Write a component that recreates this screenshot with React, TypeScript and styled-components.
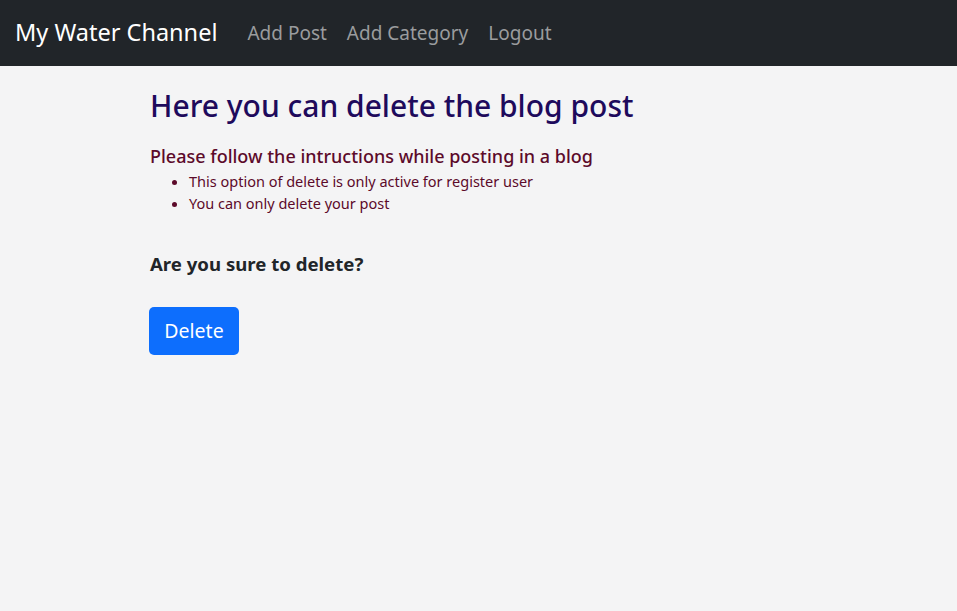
import React from "react";
import styled, { createGlobalStyle } from "styled-components";

const Global = createGlobalStyle`
  html, body { margin: 0; padding: 0; background: #f4f4f5; }
  body { font-family: "Noto Sans", "Open Sans", sans-serif; }
  * { box-sizing: border-box; }
`;

const Page = styled.div`
  min-height: 611px;
  background: #f4f4f5;
`;

const NavBar = styled.nav`
  height: 66px;
  background: #212529;
  display: flex;
  align-items: center;
  padding: 0 15px;
`;

const Brand = styled.a`
  color: #ffffff;
  font-size: 23.5px;
  text-decoration: none;
  margin-right: 30px;
  line-height: 1;
`;

const NavLinks = styled.div`
  display: flex;
  gap: 20px;
`;

const NavLink = styled.a`
  color: #9a9c9e;
  font-size: 19px;
  text-decoration: none;
  line-height: 1;
`;

const Main = styled.main`
  padding: 22px 0 0 150px;
  display: flex;
  flex-direction: column;
  align-items: flex-start;
`;

const Title = styled.h1`
  margin: 0;
  font-size: 30px;
  font-weight: 500;
  color: #1e0a5c;
  line-height: 1.2;
`;

const SubTitle = styled.h4`
  margin: 22px 0 0;
  font-size: 18px;
  font-weight: 500;
  color: #5c0a2a;
  line-height: 1.2;
`;

const List = styled.ul`
  margin: 2px 0 0;
  padding-left: 39px;
  color: #5c0a2a;
  font-size: 14.5px;
  line-height: 22px;
`;

const Question = styled.h5`
  margin: 39px 0 0;
  font-size: 18.6px;
  font-weight: 700;
  color: #212529;
  line-height: 1.2;
`;

const DeleteButton = styled.button`
  margin-top: 32px;
  margin-left: -1px;
  width: 90px;
  height: 48px;
  border: none;
  border-radius: 5px;
  background: #0d6efd;
  color: #ffffff;
  font-family: inherit;
  font-size: 19.5px;
  cursor: pointer;
`;

export default function App() {
  return (
    <Page>
      <Global />
      <NavBar>
        <Brand href="#">My Water Channel</Brand>
        <NavLinks>
          <NavLink href="#">Add Post</NavLink>
          <NavLink href="#">Add Category</NavLink>
          <NavLink href="#">Logout</NavLink>
        </NavLinks>
      </NavBar>
      <Main>
        <Title>Here you can delete the blog post</Title>
        <SubTitle>Please follow the intructions while posting in a blog</SubTitle>
        <List>
          <li>This option of delete is only active for register user</li>
          <li>You can only delete your post</li>
        </List>
        <Question>Are you sure to delete?</Question>
        <DeleteButton>Delete</DeleteButton>
      </Main>
    </Page>
  );
}
